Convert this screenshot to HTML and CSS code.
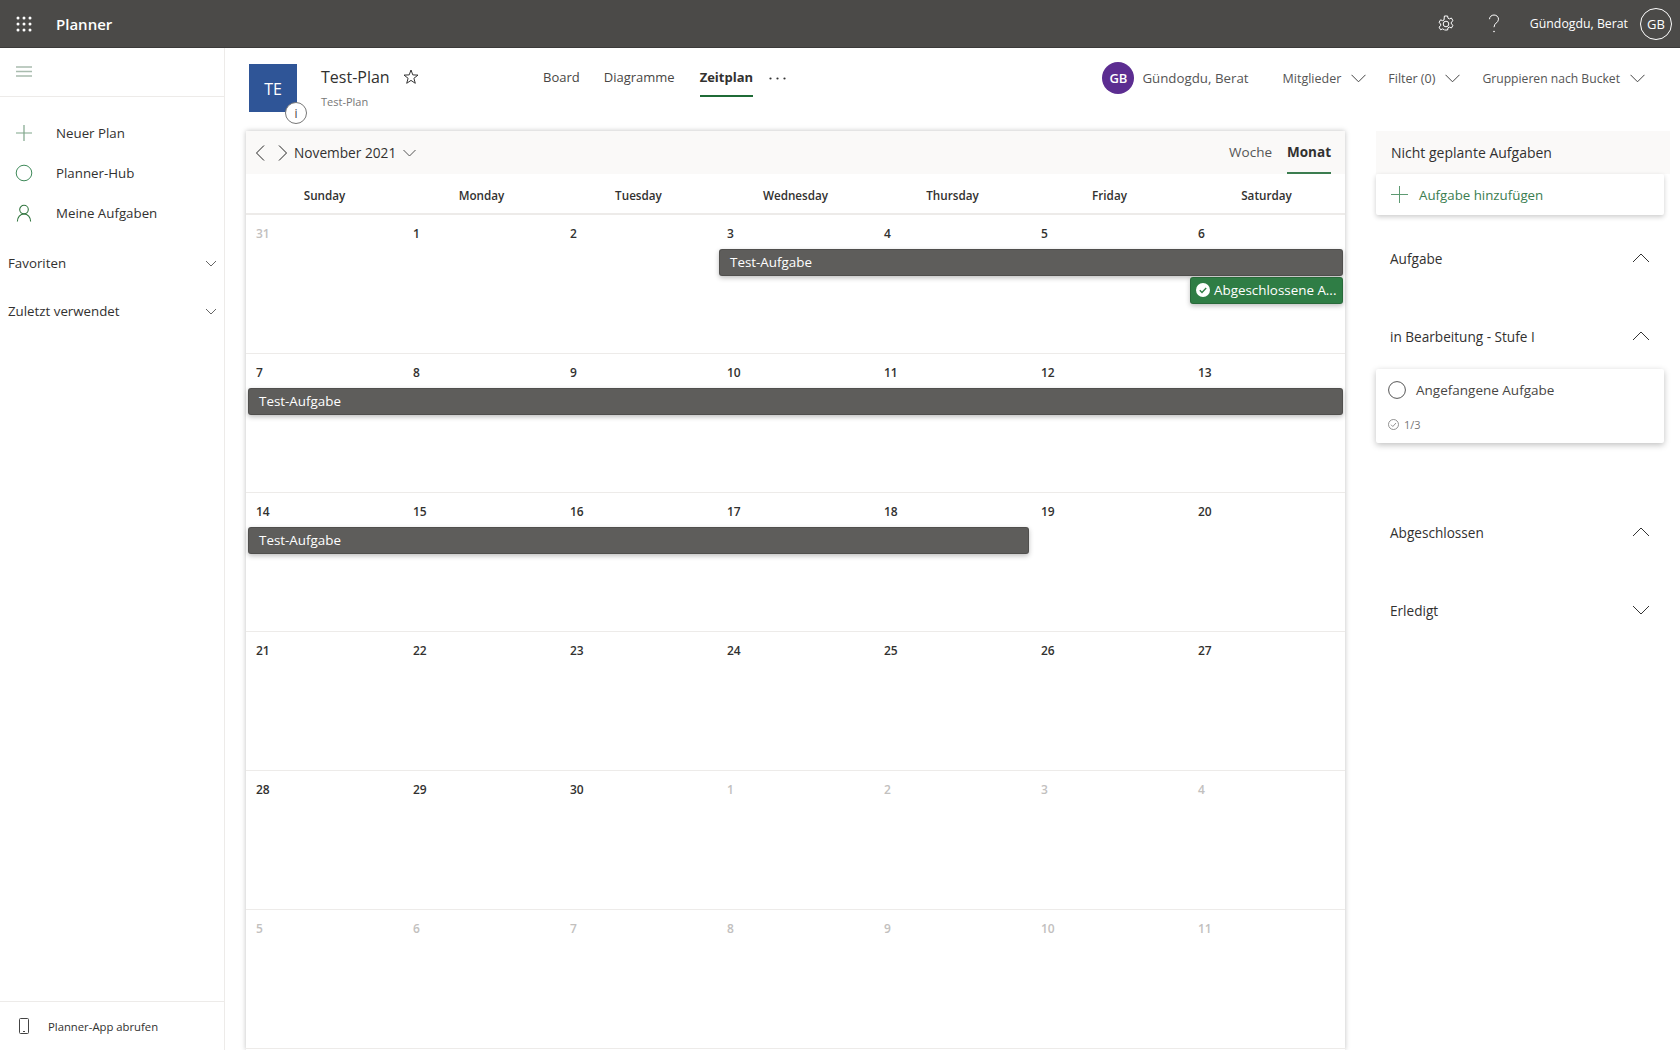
FILE: index.html
```html
<!DOCTYPE html>
<html lang="de">
<head>
    <meta charset="UTF-8">
    <title>Planner</title>
    <link rel="stylesheet" href="styles.css">
</head>
<body>
    <header class="topbar">
        <svg class="waffle" width="16" height="16" viewBox="0 0 16 16" fill="#fff">
            <circle cx="2" cy="2" r="1.5"/><circle cx="8" cy="2" r="1.5"/><circle cx="14" cy="2" r="1.5"/>
            <circle cx="2" cy="8" r="1.5"/><circle cx="8" cy="8" r="1.5"/><circle cx="14" cy="8" r="1.5"/>
            <circle cx="2" cy="14" r="1.5"/><circle cx="8" cy="14" r="1.5"/><circle cx="14" cy="14" r="1.5"/>
        </svg>
        <span class="app-name">Planner</span>
        <div class="topbar-right">
            <svg class="gear" width="18" height="18" viewBox="0 0 18 18" fill="none" stroke="#fff" stroke-width="1">
                <circle cx="9" cy="9" r="2.8"/>
                <path d="M7.4 1h3.2l.4 2.2 1.4.7 2-.9 1.6 2.7-1.7 1.4v1.8l1.7 1.4-1.6 2.7-2-.9-1.4.7-.4 2.2H7.4L7 14.6l-1.4-.7-2 .9L2 12.1l1.7-1.4V8.9L2 7.5l1.6-2.7 2 .9L7 5z" stroke-linejoin="round"/>
            </svg>
            <svg class="help" width="12" height="20" viewBox="0 0 12 20" fill="none" stroke="#fff" stroke-width="1">
                <path d="M1.5 5.2C1.5 2.8 3.5 1 6 1s4.500 1.800 4.500 4.200c0 3.600-4.500 3.800-4.500 8"/>
                <circle cx="6" cy="17.500" r=".8" fill="#fff" stroke="none"/>
            </svg>
            <span class="user-name">Gündogdu, Berat</span>
            <span class="user-badge">GB</span>
        </div>
    </header>

    <div class="main">
        <nav class="sidebar">
            <div class="side-top">
                <svg width="16" height="11" viewBox="0 0 16 11" stroke="#a9bcae" stroke-width="1.4">
                    <path d="M0 1h16M0 5.500h16M0 10h16"/>
                </svg>
            </div>
            <ul class="side-links">
                <li>
                    <svg width="18" height="18" viewBox="0 0 18 18" stroke="#7fa58a" stroke-width="1.2"><path d="M9 1v16M1 9h16"/></svg>
                    Neuer Plan
                </li>
                <li>
                    <svg width="18" height="18" viewBox="0 0 18 18" fill="none" stroke="#3f8a5a" stroke-width="1"><circle cx="9" cy="9" r="7.800"/></svg>
                    Planner-Hub
                </li>
                <li>
                    <svg width="18" height="18" viewBox="0 0 18 18" fill="none" stroke="#31753f" stroke-width="1.1"><circle cx="9" cy="5.600" r="4.300"/><path d="M2.400 17.500c0-4.200 2.800-7.500 6.600-7.500s6.600 3.300 6.600 7.500"/></svg>
                    Meine Aufgaben
                </li>
            </ul>
            <div class="side-group">
                <span>Favoriten</span>
                <svg width="12" height="7" viewBox="0 0 12 7" fill="none" stroke="#666" stroke-width="1"><path d="M1 1l5 5 5-5"/></svg>
            </div>
            <div class="side-group">
                <span>Zuletzt verwendet</span>
                <svg width="12" height="7" viewBox="0 0 12 7" fill="none" stroke="#666" stroke-width="1"><path d="M1 1l5 5 5-5"/></svg>
            </div>
            <div class="side-bottom">
                <svg width="10" height="16" viewBox="0 0 10 16" fill="none" stroke="#444" stroke-width="1"><rect x=".5" y=".5" width="9" height="15" rx="1"/><path d="M4 13.500h2"/></svg>
                Planner-App abrufen
            </div>
        </nav>

        <div class="content">
            <div class="plan-header">
                <div class="plan-icon">TE
                    <span class="plan-info">i</span>
                </div>
                <div class="plan-title">
                    <div class="plan-name">Test-Plan
                        <svg width="16" height="16" viewBox="0 0 16 16" fill="none" stroke="#333" stroke-width="1" stroke-linejoin="round"><path d="M8 1l1.800 4.900 5.200.2-4.100 3.200 1.400 5-4.300-2.900-4.300 2.900 1.400-5L1 6.100l5.200-.2z"/></svg>
                    </div>
                    <div class="plan-sub">Test-Plan</div>
                </div>
                <div class="plan-tabs">
                    <span class="tab">Board</span>
                    <span class="tab">Diagramme</span>
                    <span class="tab active">Zeitplan</span>
                    <svg class="tab-more" width="17" height="3" viewBox="0 0 17 3" fill="#333"><circle cx="1.500" cy="1.500" r="1.100"/><circle cx="8.500" cy="1.500" r="1.100"/><circle cx="15.500" cy="1.500" r="1.100"/></svg>
                </div>
                <div class="plan-tools">
                    <span class="member-badge">GB</span>
                    <span class="member-name">Gündogdu, Berat</span>
                    <span class="tool">Mitglieder
                        <svg width="15" height="9" viewBox="0 0 15 9" fill="none" stroke="#444" stroke-width="1"><path d="M.5.8l7 7 7-7"/></svg>
                    </span>
                    <span class="tool">Filter (0)
                        <svg width="15" height="9" viewBox="0 0 15 9" fill="none" stroke="#444" stroke-width="1"><path d="M.5.8l7 7 7-7"/></svg>
                    </span>
                    <span class="tool">Gruppieren nach Bucket
                        <svg width="15" height="9" viewBox="0 0 15 9" fill="none" stroke="#444" stroke-width="1"><path d="M.5.8l7 7 7-7"/></svg>
                    </span>
                </div>
            </div>

            <div class="schedule">
                <section class="calendar">
                    <div class="cal-head">
                        <svg width="10" height="16" viewBox="0 0 10 16" fill="none" stroke="#222" stroke-width="1"><path d="M9 .5L1.500 8 9 15.500"/></svg>
                        <svg class="next" width="10" height="16" viewBox="0 0 10 16" fill="none" stroke="#222" stroke-width="1"><path d="M1 .5L8.500 8 1 15.500"/></svg>
                        <span class="cal-month">November 2021</span>
                        <svg width="13" height="8" viewBox="0 0 13 8" fill="none" stroke="#555" stroke-width="1"><path d="M.5 1l6 6 6-6"/></svg>
                        <div class="cal-views">
                            <span class="view">Woche</span>
                            <span class="view active">Monat</span>
                        </div>
                    </div>
                    <div class="weekdays">
                        <span>Sunday</span><span>Monday</span><span>Tuesday</span><span>Wednesday</span><span>Thursday</span><span>Friday</span><span>Saturday</span>
                    </div>
                    <div class="week">
                        <span class="day muted">31</span><span class="day">1</span><span class="day">2</span><span class="day">3</span><span class="day">4</span><span class="day">5</span><span class="day">6</span>
                        <div class="event from-wed">Test-Aufgabe</div>
                        <div class="event done on-sat">
                            <svg width="14" height="14" viewBox="0 0 14 14"><circle cx="7" cy="7" r="7" fill="#fff"/><path d="M3.800 7.200l2.200 2.200 4.200-4.400" fill="none" stroke="#2f7d45" stroke-width="1.400"/></svg>
                            Abgeschlossene A...
                        </div>
                    </div>
                    <div class="week">
                        <span class="day">7</span><span class="day">8</span><span class="day">9</span><span class="day">10</span><span class="day">11</span><span class="day">12</span><span class="day">13</span>
                        <div class="event full">Test-Aufgabe</div>
                    </div>
                    <div class="week">
                        <span class="day">14</span><span class="day">15</span><span class="day">16</span><span class="day">17</span><span class="day">18</span><span class="day">19</span><span class="day">20</span>
                        <div class="event to-thu">Test-Aufgabe</div>
                    </div>
                    <div class="week">
                        <span class="day">21</span><span class="day">22</span><span class="day">23</span><span class="day">24</span><span class="day">25</span><span class="day">26</span><span class="day">27</span>
                    </div>
                    <div class="week">
                        <span class="day">28</span><span class="day">29</span><span class="day">30</span><span class="day muted">1</span><span class="day muted">2</span><span class="day muted">3</span><span class="day muted">4</span>
                    </div>
                    <div class="week">
                        <span class="day muted">5</span><span class="day muted">6</span><span class="day muted">7</span><span class="day muted">8</span><span class="day muted">9</span><span class="day muted">10</span><span class="day muted">11</span>
                    </div>
                </section>

                <aside class="backlog">
                    <div class="backlog-head">Nicht geplante Aufgaben</div>
                    <div class="add-task">
                        <svg width="17" height="17" viewBox="0 0 17 17" stroke="#5d9a72" stroke-width="1"><path d="M8.500 0v17M0 8.500h17"/></svg>
                        Aufgabe hinzufügen
                    </div>
                    <div class="bucket bucket-first">Aufgabe
                        <svg width="18" height="10" viewBox="0 0 18 10" fill="none" stroke="#333" stroke-width="1"><path d="M1 9l8-8 8 8"/></svg>
                    </div>
                    <div class="bucket">in Bearbeitung - Stufe I
                        <svg width="18" height="10" viewBox="0 0 18 10" fill="none" stroke="#333" stroke-width="1"><path d="M1 9l8-8 8 8"/></svg>
                    </div>
                    <div class="task-card">
                        <div class="task-title">
                            <svg width="18" height="18" viewBox="0 0 18 18" fill="none" stroke="#555" stroke-width="1"><circle cx="9" cy="9" r="8.400"/></svg>
                            Angefangene Aufgabe
                        </div>
                        <div class="task-meta">
                            <svg width="11" height="11" viewBox="0 0 11 11" fill="none" stroke="#777" stroke-width=".8"><circle cx="5.500" cy="5.500" r="5"/><path d="M3 5.700l1.800 1.800L8 4"/></svg>
                            1/3
                        </div>
                    </div>
                    <div class="bucket bucket-done">Abgeschlossen
                        <svg width="18" height="10" viewBox="0 0 18 10" fill="none" stroke="#333" stroke-width="1"><path d="M1 9l8-8 8 8"/></svg>
                    </div>
                    <div class="bucket">Erledigt
                        <svg width="18" height="10" viewBox="0 0 18 10" fill="none" stroke="#333" stroke-width="1"><path d="M1 1l8 8 8-8"/></svg>
                    </div>
                </aside>
            </div>
        </div>
    </div>
</body>
</html>
```

FILE: styles.css
```css
:root {
    --bar-color: #4b4a48;
    --green: #31753f;
    --panel-color: #faf9f8;
    --line-color: #edebe9;
    --text-color: #323130;
}

* {
    margin: 0;
    padding: 0;
    box-sizing: border-box;
}

html,
body {
    height: 100%;
    overflow: hidden;
}

body {
    display: flex;
    flex-direction: column;
    font-family: "Open Sans", "Noto Sans", sans-serif;
    font-size: 13px;
    color: var(--text-color);
    background-color: white;
}

/* top bar */
.topbar {
    flex: none;
    height: 48px;
    display: flex;
    align-items: center;
    padding: 0 8px 0 16px;
    background-color: var(--bar-color);
    border-bottom: 1px solid #3b3a39;
    color: white;
}

.app-name {
    margin-left: 24px;
    font-size: 15px;
    font-weight: 600;
}

.topbar-right {
    margin-left: auto;
    display: flex;
    align-items: center;
}

.help {
    margin-left: 33px;
}

.user-name {
    margin-left: 30px;
    font-size: 12.300px;
}

.user-badge {
    margin-left: 12px;
    width: 32px;
    height: 32px;
    display: flex;
    align-items: center;
    justify-content: center;
    border: 1px solid white;
    border-radius: 50%;
    font-size: 13px;
}

.main {
    flex: 1;
    min-height: 0;
    display: flex;
}

/* left navigation */
.sidebar {
    flex: none;
    width: 225px;
    display: flex;
    flex-direction: column;
    border-right: 1px solid var(--line-color);
}

.side-top {
    height: 49px;
    display: flex;
    align-items: center;
    padding: 0 0 2px 16px;
    border-bottom: 1px solid var(--line-color);
}

.side-links {
    list-style: none;
    margin-top: 16px;
}

.side-links li {
    height: 40px;
    display: flex;
    align-items: center;
    gap: 23px;
    padding-left: 15px;
    font-size: 13.300px;
}

.side-group {
    height: 48px;
    display: flex;
    align-items: center;
    justify-content: space-between;
    padding: 0 7px 0 8px;
    font-size: 13.300px;
}

.side-links + .side-group {
    margin-top: 6px;
}

.side-bottom {
    margin-top: auto;
    height: 49px;
    display: flex;
    align-items: center;
    gap: 19px;
    padding-left: 19px;
    border-top: 1px solid var(--line-color);
    font-size: 11.300px;
}

/* plan header */
.content {
    flex: 1;
    min-width: 0;
    display: flex;
    flex-direction: column;
}

.plan-header {
    flex: none;
    height: 83px;
    display: flex;
    padding: 16px 35px 0 24px;
}

.plan-icon {
    position: relative;
    width: 48px;
    height: 48px;
    display: flex;
    align-items: center;
    justify-content: center;
    padding-top: 2px;
    background-color: #2f5597;
    color: white;
    font-size: 16px;
}

.plan-info {
    position: absolute;
    right: -10px;
    bottom: -12px;
    width: 22px;
    height: 22px;
    display: flex;
    align-items: center;
    justify-content: center;
    background-color: white;
    border: 1px solid #777;
    border-radius: 50%;
    color: #444;
    font-size: 12px;
}

.plan-title {
    margin-left: 24px;
    width: 222px;
    padding-top: 1px;
}

.plan-name {
    display: flex;
    align-items: center;
    gap: 13px;
    font-size: 16px;
    line-height: 24px;
}

.plan-sub {
    margin-top: 5px;
    font-size: 11px;
    color: #777;
}

.plan-tabs {
    display: flex;
    align-items: flex-start;
    gap: 24px;
    font-size: 13px;
}

.tab {
    height: 33px;
    padding-top: 1px;
    line-height: 24px;
    color: #484644;
}

.tab.active {
    margin-left: 1px;
    font-weight: 700;
    color: var(--text-color);
    border-bottom: 2px solid #1f6b36;
}

.tab-more {
    margin: 13px 0 0 -8px;
}

.plan-tools {
    margin: -2px 0 0 auto;
    height: 32px;
    display: flex;
    align-items: center;
    color: #555;
}

.member-badge {
    width: 32px;
    height: 32px;
    display: flex;
    align-items: center;
    justify-content: center;
    background-color: #5c2d91;
    border-radius: 50%;
    color: white;
    font-size: 13px;
    font-weight: 600;
}

.member-name {
    margin: 0 34px 0 8px;
    font-size: 13.300px;
}

.tool {
    display: flex;
    align-items: center;
    gap: 10px;
    margin-right: 22px;
    font-size: 12.500px;
}

.tool:last-child {
    margin-right: 0;
    font-size: 12.150px;
}

/* calendar */
.schedule {
    flex: 1;
    min-height: 0;
    display: flex;
    padding-left: 21px;
}

.calendar {
    width: 1099px;
    display: flex;
    flex-direction: column;
    box-shadow: 0 0 5px rgba(0, 0, 0, 0.25);
}

.cal-head {
    flex: none;
    height: 43px;
    display: flex;
    align-items: center;
    padding: 0 14px 0 9px;
    background-color: var(--panel-color);
}

.next {
    margin-left: 13px;
}

.cal-month {
    margin: 0 7px 0 6px;
    font-size: 13.700px;
}

.cal-views {
    margin-left: auto;
    height: 100%;
    display: flex;
    gap: 15px;
    font-size: 13.500px;
}

.view {
    line-height: 42px;
    color: #555;
}

.view.active {
    font-weight: 700;
    color: var(--text-color);
    border-bottom: 2px solid #3b7d50;
}

.weekdays {
    flex: none;
    height: 41px;
    display: grid;
    grid-template-columns: repeat(7, 1fr);
    align-items: center;
    padding-top: 2px;
    text-align: center;
    border-bottom: 2px solid var(--line-color);
    font-size: 11.700px;
    font-weight: 600;
}

.week {
    flex: none;
    height: 139px;
    display: grid;
    grid-template-columns: repeat(7, 1fr);
    grid-template-rows: 34px 28px 29px;
    border-bottom: 1px solid var(--line-color);
}

.day {
    padding: 11px 0 0 10px;
    font-size: 12px;
    font-weight: 600;
    line-height: 16px;
}

.day.muted {
    color: #c2c0be;
}

.event {
    height: 27px;
    display: flex;
    align-items: center;
    gap: 4px;
    grid-row: 2;
    margin: 0 2px 0 2px;
    padding: 0 0 2px 10px;
    background-color: #5e5d5b;
    border: 1px solid rgba(0, 0, 0, 0.15);
    border-radius: 3px;
    box-shadow: 0 2px 5px rgba(0, 0, 0, 0.25);
    color: white;
    font-size: 13.400px;
}

.from-wed {
    grid-column: 4 / 8;
}

.full {
    grid-column: 1 / 8;
}

.to-thu {
    grid-column: 1 / 6;
}

.event.done {
    grid-row: 3;
    grid-column: 7;
    padding-left: 5px;
    background-color: #2f7d45;
}

/* right panel */
.backlog {
    flex: 1;
    min-width: 0;
    margin: 0 10px 0 31px;
}

.backlog-head {
    height: 43px;
    display: flex;
    align-items: center;
    padding-left: 15px;
    background-color: var(--panel-color);
    font-size: 14px;
}

.add-task {
    height: 41px;
    width: 288px;
    display: flex;
    align-items: center;
    gap: 11px;
    padding-left: 15px;
    border-radius: 2px;
    box-shadow: 0 2px 5px rgba(0, 0, 0, 0.2);
    color: #3b7d50;
    font-size: 13.300px;
}

.bucket {
    height: 78px;
    display: flex;
    align-items: center;
    justify-content: space-between;
    padding: 0 20px 0 14px;
    font-size: 13.600px;
}

.bucket-first {
    margin-top: 4px;
}

.task-card {
    width: 288px;
    height: 74px;
    margin-top: -6px;
    padding: 11px 0 0 12px;
    border-radius: 2px;
    box-shadow: 0 2px 6px rgba(0, 0, 0, 0.25);
}

.task-title {
    display: flex;
    align-items: center;
    gap: 10px;
    font-size: 13.500px;
    line-height: 20px;
    color: #484644;
}

.task-meta {
    display: flex;
    align-items: center;
    gap: 5px;
    margin-top: 17px;
    font-size: 11px;
    color: #777;
}

.bucket-done {
    margin-top: 50px;
}
```
